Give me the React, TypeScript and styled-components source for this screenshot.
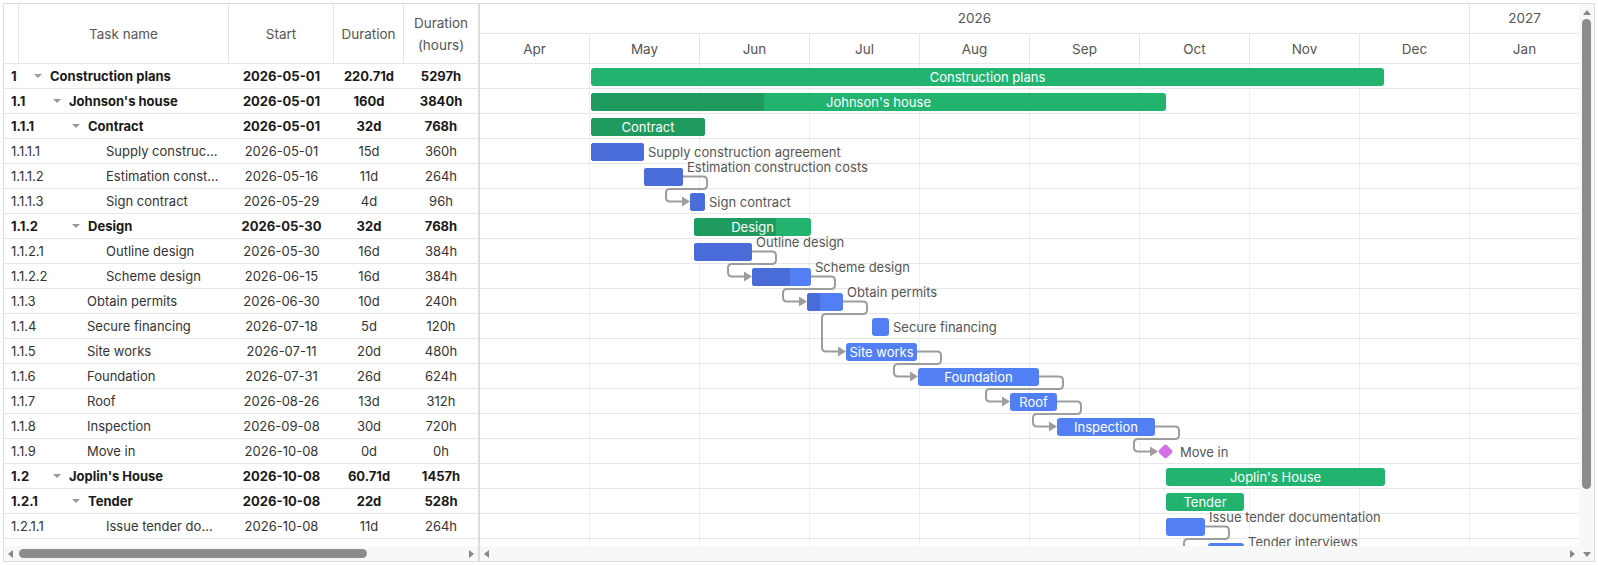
import React from "react";
import styled, { createGlobalStyle } from "styled-components";

const Global = createGlobalStyle`
  html, body { margin: 0; padding: 0; background: #fff; }
  body { font-family: Inter, "Noto Sans", sans-serif; font-size: 13px; color: #222; }
`;

const ROW = 25;
const LINE = "#e6e6e6";

type Row = { wbs: string; name: string; start: string; dur: string; hrs: string; level: number; parent?: boolean };
const rows: Row[] = [
  { wbs: "1", name: "Construction plans", start: "2026-05-01", dur: "220.71d", hrs: "5297h", level: 0, parent: true },
  { wbs: "1.1", name: "Johnson's house", start: "2026-05-01", dur: "160d", hrs: "3840h", level: 1, parent: true },
  { wbs: "1.1.1", name: "Contract", start: "2026-05-01", dur: "32d", hrs: "768h", level: 2, parent: true },
  { wbs: "1.1.1.1", name: "Supply construction agreement", start: "2026-05-01", dur: "15d", hrs: "360h", level: 3 },
  { wbs: "1.1.1.2", name: "Estimation construction costs", start: "2026-05-16", dur: "11d", hrs: "264h", level: 3 },
  { wbs: "1.1.1.3", name: "Sign contract", start: "2026-05-29", dur: "4d", hrs: "96h", level: 3 },
  { wbs: "1.1.2", name: "Design", start: "2026-05-30", dur: "32d", hrs: "768h", level: 2, parent: true },
  { wbs: "1.1.2.1", name: "Outline design", start: "2026-05-30", dur: "16d", hrs: "384h", level: 3 },
  { wbs: "1.1.2.2", name: "Scheme design", start: "2026-06-15", dur: "16d", hrs: "384h", level: 3 },
  { wbs: "1.1.3", name: "Obtain permits", start: "2026-06-30", dur: "10d", hrs: "240h", level: 2 },
  { wbs: "1.1.4", name: "Secure financing", start: "2026-07-18", dur: "5d", hrs: "120h", level: 2 },
  { wbs: "1.1.5", name: "Site works", start: "2026-07-11", dur: "20d", hrs: "480h", level: 2 },
  { wbs: "1.1.6", name: "Foundation", start: "2026-07-31", dur: "26d", hrs: "624h", level: 2 },
  { wbs: "1.1.7", name: "Roof", start: "2026-08-26", dur: "13d", hrs: "312h", level: 2 },
  { wbs: "1.1.8", name: "Inspection", start: "2026-09-08", dur: "30d", hrs: "720h", level: 2 },
  { wbs: "1.1.9", name: "Move in", start: "2026-10-08", dur: "0d", hrs: "0h", level: 2 },
  { wbs: "1.2", name: "Joplin's House", start: "2026-10-08", dur: "60.71d", hrs: "1457h", level: 1, parent: true },
  { wbs: "1.2.1", name: "Tender", start: "2026-10-08", dur: "22d", hrs: "528h", level: 2, parent: true },
  { wbs: "1.2.1.1", name: "Issue tender documentation", start: "2026-10-08", dur: "11d", hrs: "264h", level: 3 },
];

const CHART_LEFT = 479;
type Bar = {
  row: number; x1: number; x2: number; kind: "summary" | "task" | "milestone";
  progress?: number; label: string; inside?: boolean; above?: boolean;
};
const bars: Bar[] = [
  { row: 0, x1: 590, x2: 1383, kind: "summary", progress: 590, label: "Construction plans", inside: true },
  { row: 1, x1: 590, x2: 1165, kind: "summary", progress: 763, label: "Johnson's house", inside: true },
  { row: 2, x1: 590, x2: 704, kind: "summary", progress: 704, label: "Contract", inside: true },
  { row: 3, x1: 590, x2: 643, kind: "task", progress: 643, label: "Supply construction agreement" },
  { row: 4, x1: 643, x2: 682, kind: "task", progress: 682, label: "Estimation construction costs", above: true },
  { row: 5, x1: 689, x2: 704, kind: "task", progress: 704, label: "Sign contract" },
  { row: 6, x1: 693, x2: 810, kind: "summary", progress: 775, label: "Design", inside: true },
  { row: 7, x1: 693, x2: 751, kind: "task", progress: 751, label: "Outline design", above: true },
  { row: 8, x1: 751, x2: 810, kind: "task", progress: 789, label: "Scheme design", above: true },
  { row: 9, x1: 806, x2: 842, kind: "task", progress: 819, label: "Obtain permits", above: true },
  { row: 10, x1: 871, x2: 888, kind: "task", label: "Secure financing" },
  { row: 11, x1: 845, x2: 916, kind: "task", label: "Site works", inside: true },
  { row: 12, x1: 917, x2: 1038, kind: "task", label: "Foundation", inside: true },
  { row: 13, x1: 1009, x2: 1056, kind: "task", label: "Roof", inside: true },
  { row: 14, x1: 1056, x2: 1154, kind: "task", label: "Inspection", inside: true },
  { row: 15, x1: 1157, x2: 1173, kind: "milestone", label: "Move in" },
  { row: 16, x1: 1165, x2: 1384, kind: "summary", label: "Joplin's House", inside: true },
  { row: 17, x1: 1165, x2: 1243, kind: "summary", label: "Tender", inside: true },
  { row: 18, x1: 1165, x2: 1204, kind: "task", label: "Issue tender documentation", above: true },
  { row: 19, x1: 1207, x2: 1243, kind: "task", label: "Tender interviews", above: true },
];
const links: [number, number][] = [[4, 5], [7, 8], [8, 9], [9, 11], [11, 12], [12, 13], [13, 14], [14, 15], [18, 19]];

const months = ["Apr", "May", "Jun", "Jul", "Aug", "Sep", "Oct", "Nov", "Dec", "Jan"];
const MW = 110;

const Frame = styled.div`
  margin: 3px;
  width: 1592px;
  height: 559px;
  border: 1px solid #dcdcdc;
  box-sizing: border-box;
  display: flex;
  overflow: hidden;
`;
const Pane = styled.div<{ $w?: number }>`
  display: flex;
  flex-direction: column;
  ${(p) => (p.$w ? `width:${p.$w}px;flex:none;` : "flex:1;min-width:0;")}
`;
const Splitter = styled.div`
  width: 2px;
  background: #dcdcdc;
  flex: none;
`;
const GridHeader = styled.div`
  height: 59px;
  display: flex;
  border-bottom: 1px solid ${LINE};
  flex: none;
`;
const HCell = styled.div<{ $w: number; $last?: boolean }>`
  width: ${(p) => p.$w}px;
  flex: none;
  display: flex;
  align-items: center;
  justify-content: center;
  text-align: center;
  color: #555;
  font-size: 13.5px;
  line-height: 22px;
  border-right: ${(p) => (p.$last ? "none" : `1px solid ${LINE}`)};
  box-sizing: border-box;
`;
const Body = styled.div`
  flex: 1;
  overflow: hidden;
  position: relative;
`;
const GRow = styled.div<{ $bold?: boolean }>`
  height: ${ROW}px;
  box-sizing: border-box;
  border-bottom: 1px solid ${LINE};
  display: flex;
  align-items: center;
  font-weight: ${(p) => (p.$bold ? 700 : 400)};
  color: ${(p) => (p.$bold ? "#1a1a1a" : "#333")};
  font-size: 13px;
`;
const NameCell = styled.div`
  width: 225px;
  flex: none;
  display: flex;
  align-items: center;
  padding: 0 10px 0 7px;
  box-sizing: border-box;
  white-space: nowrap;
  overflow: hidden;
`;
const Wbs = styled.span`
  width: 23px;
  flex: none;
`;
const Indent = styled.span<{ $level: number; $leaf?: boolean }>`
  width: ${(p) => p.$level * 19 + (p.$leaf ? 15 : 0)}px;
  flex: none;
`;
const Caret = styled.span`
  width: 16px;
  flex: none;
  display: inline-flex;
  align-items: center;
  &::before {
    content: "";
    border-left: 4px solid transparent;
    border-right: 4px solid transparent;
    border-top: 4px solid #999;
  }
`;
const Name = styled.span`
  overflow: hidden;
  text-overflow: ellipsis;
  min-width: 0;
`;
const Cell = styled.div<{ $w: number }>`
  width: ${(p) => p.$w}px;
  flex: none;
  text-align: center;
`;
const HScroll = styled.div`
  height: 15px;
  flex: none;
  background: #f8f8f8;
  display: flex;
  align-items: center;
  padding: 0 4px;
  gap: 6px;
`;
const Arrow = styled.span<{ $dir: "l" | "r" | "u" | "d" }>`
  width: 0;
  height: 0;
  flex: none;
  ${(p) =>
    p.$dir === "l"
      ? "border-top:4px solid transparent;border-bottom:4px solid transparent;border-right:5px solid #888;"
      : p.$dir === "r"
      ? "border-top:4px solid transparent;border-bottom:4px solid transparent;border-left:5px solid #888;"
      : p.$dir === "u"
      ? "border-left:4px solid transparent;border-right:4px solid transparent;border-bottom:5px solid #888;"
      : "border-left:4px solid transparent;border-right:4px solid transparent;border-top:5px solid #888;"}
`;
const Thumb = styled.div<{ $w: number }>`
  width: ${(p) => p.$w}px;
  height: 9px;
  border-radius: 5px;
  background: #8c8c8c;
`;
const Spacer = styled.div`
  flex: 1;
`;
const ChartHeaderRow = styled.div<{ $h: number; $last?: boolean }>`
  height: ${(p) => p.$h}px;
  display: flex;
  border-bottom: ${(p) => (p.$last ? "none" : `1px solid ${LINE}`)};
`;
const ChartHead = styled.div`
  height: 59px;
  flex: none;
  border-bottom: 1px solid ${LINE};
  display: flex;
  flex-direction: column;
`;
const YearCell = styled.div<{ $w: number }>`
  width: ${(p) => p.$w}px;
  flex: none;
  box-sizing: border-box;
  border-right: 1px solid ${LINE};
  text-align: center;
  line-height: 29px;
  color: #555;
  font-size: 13.5px;
`;
const MonthCell = styled.div`
  width: ${MW}px;
  flex: none;
  box-sizing: border-box;
  border-right: 1px solid ${LINE};
  text-align: center;
  line-height: 30px;
  color: #555;
  font-size: 13.5px;
`;
const Canvas = styled.div`
  position: absolute;
  inset: 0;
`;
const VLines = styled.div`
  position: absolute;
  inset: 0;
  display: flex;
`;
const VLine = styled.div`
  width: ${MW}px;
  flex: none;
  box-sizing: border-box;
  border-right: 1px solid #efefef;
`;
const HLine = styled.div`
  height: ${ROW}px;
  box-sizing: border-box;
  border-bottom: 1px solid ${LINE};
`;
const BarBox = styled.div<{ $kind: string }>`
  position: absolute;
  height: 18px;
  border-radius: 3px;
  overflow: hidden;
  background: ${(p) => (p.$kind === "summary" ? "#22b46f" : "#537ff5")};
  display: flex;
  align-items: center;
  justify-content: center;
`;
const Progress = styled.div<{ $kind: string }>`
  position: absolute;
  left: 0;
  top: 0;
  bottom: 0;
  background: ${(p) => (p.$kind === "summary" ? "#1f9b5f" : "#496cd8")};
`;
const BarText = styled.span`
  position: relative;
  color: #fff;
  font-size: 13px;
  white-space: nowrap;
`;
const OutLabel = styled.span`
  position: absolute;
  color: #555;
  font-size: 13px;
  white-space: nowrap;
  line-height: 16px;
`;
const Diamond = styled.div`
  position: absolute;
  width: 11px;
  height: 11px;
  background: #d56fe8;
  border-radius: 2px;
  transform: rotate(45deg);
`;
const VScroll = styled.div`
  width: 15px;
  flex: none;
  background: #f8f8f8;
  display: flex;
  flex-direction: column;
  align-items: center;
  padding: 6px 0 4px;
  gap: 4px;
  box-sizing: border-box;
`;
const VThumb = styled.div`
  width: 9px;
  height: 470px;
  border-radius: 5px;
  background: #8c8c8c;
`;

const cy = (r: number) => r * ROW + 12.5;
const cx = (x: number) => x - CHART_LEFT;

function linkPath(a: Bar, b: Bar) {
  const x1 = cx(a.x2), y1 = cy(a.row), x2 = cx(b.x1), y2 = cy(b.row);
  const r = 4;
  const xr = x1 + 24, yb = y1 + 12.5, xl = x2 - 24;
  return `M${x1} ${y1} H${xr - r} Q${xr} ${y1} ${xr} ${y1 + r} V${yb - r} Q${xr} ${yb} ${xr - r} ${yb} H${xl + r} Q${xl} ${yb} ${xl} ${yb + r} V${y2 - r} Q${xl} ${y2} ${xl + r} ${y2} H${x2 - 7}`;
}

export default function App() {
  return (
    <>
      <Global />
      <Frame>
        <Pane $w={474}>
          <GridHeader>
            <HCell $w={15} />
            <HCell $w={210}>Task name</HCell>
            <HCell $w={105}>Start</HCell>
            <HCell $w={70}>Duration</HCell>
            <HCell $w={74} $last>
              Duration
              <br />
              (hours)
            </HCell>
          </GridHeader>
          <Body>
            {rows.map((r) => (
              <GRow key={r.wbs} $bold={r.parent}>
                <NameCell>
                  <Wbs>{r.wbs}</Wbs>
                  <Indent $level={r.level} $leaf={!r.parent} />
                  {r.parent && <Caret />}
                  <Name>{r.name}</Name>
                </NameCell>
                <Cell $w={105}>{r.start}</Cell>
                <Cell $w={70}>{r.dur}</Cell>
                <Cell $w={74}>{r.hrs}</Cell>
              </GRow>
            ))}
            <HLine />
          </Body>
          <HScroll>
            <Arrow $dir="l" />
            <Thumb $w={348} />
            <Spacer />
            <Arrow $dir="r" />
          </HScroll>
        </Pane>
        <Splitter />
        <Pane>
          <ChartHead>
            <ChartHeaderRow $h={29}>
              <YearCell $w={MW * 9}>2026</YearCell>
              <YearCell $w={MW}>2027</YearCell>
            </ChartHeaderRow>
            <ChartHeaderRow $h={30} $last>
              {months.map((m) => (
                <MonthCell key={m}>{m}</MonthCell>
              ))}
            </ChartHeaderRow>
          </ChartHead>
          <Body>
            <Canvas>
              <VLines>
                {months.map((m) => (
                  <VLine key={m} />
                ))}
              </VLines>
              <Canvas>
                {bars.map((b) => (
                  <HLine key={b.label} />
                ))}
              </Canvas>
              <svg width="1110" height="500" style={{ position: "absolute", left: 0, top: 0 }}>
                {links.map(([a, b]) => {
                  const A = bars[a], B = bars[b];
                  const x2 = cx(B.x1), y2 = cy(B.row);
                  return (
                    <g key={a + "-" + b}>
                      <path d={linkPath(A, B)} fill="none" stroke="#9d9d9d" strokeWidth={2} />
                      <path d={`M${x2} ${y2} L${x2 - 8} ${y2 - 5} L${x2 - 8} ${y2 + 5} Z`} fill="#9d9d9d" />
                    </g>
                  );
                })}
              </svg>
              {bars.map((b) => {
                const top = cy(b.row) - 9;
                if (b.kind === "milestone") {
                  return (
                    <React.Fragment key={b.label}>
                      <Diamond style={{ left: cx(b.x1) + 2, top: cy(b.row) - 5.5 }} />
                      <OutLabel style={{ left: cx(b.x2) + 6, top: cy(b.row) - 8 }}>{b.label}</OutLabel>
                    </React.Fragment>
                  );
                }
                return (
                  <React.Fragment key={b.label}>
                    <BarBox $kind={b.kind} style={{ left: cx(b.x1), top, width: b.x2 - b.x1 }}>
                      {b.progress && <Progress $kind={b.kind} style={{ width: b.progress - b.x1 }} />}
                      {b.inside && <BarText>{b.label}</BarText>}
                    </BarBox>
                    {!b.inside && (
                      <OutLabel style={{ left: cx(b.x2) + 4, top: cy(b.row) - 8 - (b.above ? 10 : 0) }}>{b.label}</OutLabel>
                    )}
                  </React.Fragment>
                );
              })}
            </Canvas>
          </Body>
          <HScroll>
            <Arrow $dir="l" />
            <Spacer />
            <Arrow $dir="r" />
          </HScroll>
        </Pane>
        <VScroll>
          <Arrow $dir="u" />
          <VThumb />
          <Spacer />
          <Arrow $dir="d" />
        </VScroll>
      </Frame>
    </>
  );
}
